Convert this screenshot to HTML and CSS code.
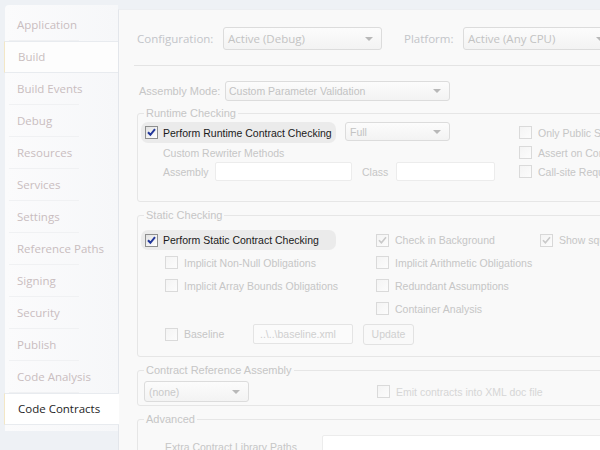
FILE: index.html
```html
<!DOCTYPE html>
<html>
<head>
<meta charset="utf-8">
<link rel="stylesheet" href="styles.css">
</head>
<body>
<div class="window">
  <nav class="sidebar">
    <div class="tab">Application</div>
    <div class="tab tab-hover">Build</div>
    <div class="tab">Build Events</div>
    <div class="tab">Debug</div>
    <div class="tab">Resources</div>
    <div class="tab">Services</div>
    <div class="tab">Settings</div>
    <div class="tab">Reference Paths</div>
    <div class="tab">Signing</div>
    <div class="tab">Security</div>
    <div class="tab">Publish</div>
    <div class="tab">Code Analysis</div>
    <div class="tab tab-active">Code Contracts</div>
  </nav>
  <main class="panel">
    <div class="config-row">
      <span class="cfg-label">Configuration:</span>
      <div class="combo combo-cfg"><span>Active (Debug)</span><i class="arrow"></i></div>
      <span class="cfg-label plat-label">Platform:</span>
      <div class="combo combo-plat"><span>Active (Any CPU)</span><i class="arrow"></i></div>
    </div>
    <div class="sep"></div>
    <div class="form">
      <div class="mode-row">
        <span class="mode-label">Assembly Mode:</span>
        <div class="combo combo-mode"><span>Custom Parameter Validation</span><i class="arrow"></i></div>
      </div>

      <fieldset class="group group-runtime">
        <legend>Runtime Checking</legend>
        <div class="rt-grid">
          <div class="pill"><span class="cb cb-on"><svg viewBox="0 0 13 13" class="tick"><path d="M3 6.2 L5.4 8.8 L10 3.2"/></svg></span><span class="lbl-on">Perform Runtime Contract Checking</span></div>
          <div class="combo combo-full"><span>Full</span><i class="arrow"></i></div>
          <div class="chk"><span class="cb"></span><span>Only Public Surface Contracts</span></div>
          <div class="sub-label">Custom Rewriter Methods</div>
          <div class="chk rt-right2"><span class="cb"></span><span>Assert on Contract Failure</span></div>
          <div class="rewriter">
            <span class="asm-label">Assembly</span>
            <span class="textbox tb-asm"></span>
            <span class="class-label">Class</span>
            <span class="textbox tb-class"></span>
          </div>
          <div class="chk"><span class="cb"></span><span>Call-site Requires Checking</span></div>
        </div>
      </fieldset>

      <fieldset class="group group-static">
        <legend>Static Checking</legend>
        <div class="st-grid">
          <div class="st-left">
            <div class="pill pill-static"><span class="cb cb-on"><svg viewBox="0 0 13 13" class="tick"><path d="M3 6.2 L5.4 8.8 L10 3.2"/></svg></span><span class="lbl-on">Perform Static Contract Checking</span></div>
            <div class="chk indent"><span class="cb"></span><span>Implicit Non-Null Obligations</span></div>
            <div class="chk indent"><span class="cb"></span><span>Implicit Array Bounds Obligations</span></div>
            <div class="row-empty"></div>
          </div>
          <div class="st-mid">
            <div class="chk first-row"><span class="cb cb-dis-on"><svg viewBox="0 0 13 13" class="tick"><path d="M3 6.2 L5.4 8.8 L10 3.2"/></svg></span><span>Check in Background</span></div>
            <div class="chk"><span class="cb"></span><span>Implicit Arithmetic Obligations</span></div>
            <div class="chk"><span class="cb"></span><span>Redundant Assumptions</span></div>
            <div class="chk"><span class="cb"></span><span>Container Analysis</span></div>
          </div>
          <div class="st-right">
            <div class="chk first-row"><span class="cb cb-dis-on"><svg viewBox="0 0 13 13" class="tick"><path d="M3 6.2 L5.4 8.8 L10 3.2"/></svg></span><span>Show squigglies</span></div>
          </div>
        </div>
        <div class="baseline-row">
          <div class="chk"><span class="cb"></span><span>Baseline</span></div>
          <span class="textbox tb-base">..\..\baseline.xml</span>
          <span class="btn">Update</span>
        </div>
      </fieldset>

      <fieldset class="group group-ref">
        <legend>Contract Reference Assembly</legend>
        <div class="ref-row">
          <div class="combo combo-none"><span>(none)</span><i class="arrow"></i></div>
          <div class="chk emit"><span class="cb"></span><span>Emit contracts into XML doc file</span></div>
        </div>
      </fieldset>

      <fieldset class="group group-adv">
        <legend>Advanced</legend>
        <div class="adv-row">
          <span class="adv-label">Extra Contract Library Paths</span>
          <span class="textbox tb-extra"></span>
        </div>
      </fieldset>
    </div>
  </main>
</div>
</body>
</html>
```

FILE: styles.css
```css
* { box-sizing: border-box; }
html, body { margin: 0; padding: 0; }
body {
  width: 600px;
  height: 450px;
  overflow: hidden;
  background: #eef1f5;
  font-family: "Liberation Sans", Arial, sans-serif;
}
.window {
  display: flex;
  height: 450px;
  overflow: hidden;
}
.sidebar {
  width: 113px;
  flex: none;
  margin: 5px 0 0 5px;
  padding-top: 4px;
  height: 426px;
  background: linear-gradient(to right, #fbfbfc, #f6f7f9);
  border-radius: 4px 0 0 0;
  font-family: "Open Sans", sans-serif;
  font-size: 11.5px;
}
.tab {
  height: 32px;
  line-height: 31px;
  padding-left: 12px;
  color: #c9bdbf;
  position: relative;
  white-space: nowrap;
}
.tab::after {
  content: "";
  position: absolute;
  left: 4px;
  width: 70px;
  bottom: 0;
  height: 1px;
  background: #f0f1f3;
}
.tab-hover, .tab-active {
  margin-left: -1px;
  padding-left: 13px;
  background: #fdfdfd;
  border-top: 1px solid #e8ebef;
  border-bottom: 1px solid #e8ebef;
  border-left: 1px solid #f3e7c6;
  line-height: 29px;
}
.tab-hover::after, .tab-active::after { display: none; }
.tab-active {
  background: #ffffff;
  color: #1e1e1e;
  width: 115px;
}
.panel {
  flex: 1;
  margin-top: 9px;
  background: #f9f9f9;
  border-left: 1px solid #e3e6eb;
  border-top: 1px solid #eceef1;
  overflow: hidden;
  min-width: 0;
}
.config-row {
  display: flex;
  align-items: center;
  height: 23px;
  margin-top: 17px;
  padding-left: 18px;
  font-family: "Open Sans", sans-serif;
  font-size: 11.5px;
  white-space: nowrap;
}
.cfg-label { color: #c3c5c9; width: 86px; flex: none; }
.plat-label { width: 59px; margin-left: 22px; }
.combo {
  position: relative;
  flex: none;
  border: 1px solid #dcdcdc;
  border-radius: 3px;
  background: linear-gradient(#fcfcfc, #f3f3f3);
  color: #c3c3c3;
  display: flex;
  align-items: center;
  padding-left: 4px;
  white-space: nowrap;
  overflow: hidden;
}
.combo-cfg { width: 159px; height: 23px; }
.combo-plat { width: 150px; height: 23px; }
.arrow {
  position: absolute;
  right: 8px;
  top: 50%;
  margin-top: -2px;
  width: 0; height: 0;
  border-left: 4px solid transparent;
  border-right: 4px solid transparent;
  border-top: 4px solid #b8b8b8;
}
.sep {
  height: 1px;
  background: #e4e4e4;
  margin: 15px 0 0 15px;
}
.form {
  font-size: 10.5px;
  color: #c6c6c6;
  white-space: nowrap;
}
.mode-row {
  display: flex;
  align-items: center;
  margin-top: 15px;
  padding-left: 20px;
  height: 20px;
}
.mode-label { width: 86px; flex: none; font-size: 11px; }
.combo-mode { width: 225px; height: 20px; padding-left: 3px; }
.group {
  margin: 6px 0 0 18px;
  width: 560px;
  border: 1px solid #e6e6e6;
  border-radius: 3px;
  padding: 0 0 0 3px;
}
.group legend {
  padding: 0 2px;
  margin-left: 3px;
  line-height: 13px;
  color: #c6c6c6;
  font-size: 11px;
}
.group-static { margin-top: 7px; }
.group-ref { margin-top: 7px; }
.group-adv { margin-top: 7px; }
.rt-grid {
  display: grid;
  grid-template-columns: 204px 174px auto;
  grid-template-rows: 21px 19px 19px;
  align-items: center;
  margin-top: 2px;
  padding-bottom: 20px;
}
.pill {
  display: flex;
  align-items: center;
  height: 21px;
  width: 195px;
  padding-left: 4px;
  background: #ebebeb;
  border-radius: 7px;
}
.lbl-on { color: #1a1a1a; margin-left: 5px; font-size: 10.5px; }
.cb {
  display: inline-block;
  flex: none;
  width: 13px;
  height: 13px;
  border: 1px solid #dadada;
  background: linear-gradient(135deg, #f4f4f4, #fcfcfc);
  position: relative;
}
.cb-on {
  border-color: #8e8f8f;
  background: linear-gradient(135deg, #e2e2e2, #ffffff);
}
.cb-dis-on { border-color: #d8d8d8; }
.tick {
  position: absolute;
  left: -1px; top: -1px;
  width: 13px; height: 13px;
  fill: none;
  stroke: #22379a;
  stroke-width: 2;
}
.cb-dis-on .tick { stroke: #c9c9c9; stroke-width: 1.6; }
.chk {
  display: flex;
  align-items: center;
}
.chk .cb { margin-right: 6px; }
.combo-full { width: 105px; height: 19px; align-self: start; }
.sub-label { padding-left: 22px; grid-column: 1 / 3; }
.rt-right2 { grid-column: 3; grid-row: 2; }
.rewriter {
  grid-column: 1 / 3;
  display: flex;
  align-items: center;
  padding-left: 22px;
}
.asm-label { width: 52px; }
.textbox {
  display: inline-block;
  height: 19px;
  background: #ffffff;
  border: 1px solid #ececec;
  border-radius: 2px;
}
.tb-asm { width: 137px; }
.class-label { margin-left: 10px; width: 34px; }
.tb-class { width: 99px; }

.st-grid {
  display: grid;
  grid-template-columns: 235px 164px auto;
  margin-top: 7px;
}
.st-left > *, .st-mid > *, .st-right > * { height: 23px; }
.st-mid > .first-row, .st-right > .first-row { height: 22px; }
.pill-static { height: 20px; margin: 1px 0 1px; }
.indent { padding-left: 24px; }
.baseline-row {
  display: flex;
  align-items: center;
  height: 24px;
  padding-left: 24px;
  margin-top: 2px;
  margin-bottom: 10px;
}
.baseline-row .chk { width: 88px; }
.tb-base {
  width: 100px;
  height: 20px;
  line-height: 18px;
  padding-left: 6px;
  border-color: #e4e4e4;
  background: #fbfbfb;
  color: #cfcfcf;
}
.btn {
  margin-left: 10px;
  width: 51px;
  height: 21px;
  line-height: 19px;
  text-align: center;
  border: 1px solid #e2e2e2;
  border-radius: 3px;
  background: #f9f9f9;
  color: #d0d0d0;
}
.ref-row {
  display: flex;
  align-items: center;
  padding-bottom: 3px;
  margin-top: 4px;
}
.combo-none { width: 105px; height: 21px; color: #c9c9c9; margin-left: 3px; }
.emit { margin-left: 128px; color: #d6d6d6; }
.adv-row {
  display: flex;
  align-items: center;
  margin-top: 9px;
  padding-left: 24px;
}
.adv-label { width: 157px; }
.tb-extra { width: 300px; height: 24px; }
```
